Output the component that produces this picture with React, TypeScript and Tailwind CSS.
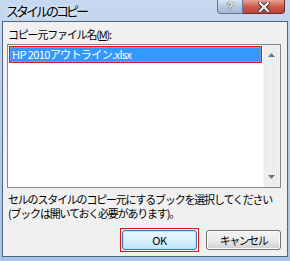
import React from 'react'

const font = { fontFamily: '"Noto Sans CJK JP", "Liberation Sans", sans-serif' }

function TitleButtons() {
  return (
    <div className="absolute right-[5px] top-0 flex">
      <div className="w-[26px] h-[14px] rounded-bl-[4px] border border-t-0 border-[#5f7590] bg-gradient-to-b from-[#dbe6f4] via-[#b7c9e0] to-[#a4b9d6] flex items-center justify-center">
        <span className="text-[11px] leading-[13px] font-bold text-white [text-shadow:0_0_1px_#333,0_0_1px_#333]" style={{ fontFamily: '"Liberation Sans", sans-serif' }}>?</span>
      </div>
      <div className="w-[42px] h-[14px] rounded-br-[4px] border border-l-0 border-t-0 border-[#6b2a24] bg-gradient-to-b from-[#e5a393] via-[#cc5b4b] to-[#b8453a] flex items-center justify-center">
        <svg width="12" height="10" viewBox="0 0 12 10">
          <path d="M2 1 L10 9 M10 1 L2 9" stroke="#3a3a3a" strokeWidth="4" strokeLinecap="square" />
          <path d="M2 1 L10 9 M10 1 L2 9" stroke="#ffffff" strokeWidth="2" strokeLinecap="square" />
        </svg>
      </div>
    </div>
  )
}

function ScrollBar() {
  return (
    <div className="w-[17px] flex flex-col justify-between items-center py-[8px] bg-[repeating-linear-gradient(90deg,#f3f3f3_0px,#f3f3f3_1px,#e9e9e9_1px,#e9e9e9_2px)]">
      <svg width="7" height="4" viewBox="0 0 7 4"><path d="M3.5 0 L7 4 L0 4 Z" fill="#6a7786" /></svg>
      <svg width="7" height="4" viewBox="0 0 7 4"><path d="M0 0 L7 0 L3.5 4 Z" fill="#6a7786" /></svg>
    </div>
  )
}

export default function App() {
  return (
    <div
      className="w-[290px] h-[261px] flex flex-col bg-gradient-to-b from-[#c5d8ef] via-[#b3cbea] to-[#a9c4e8] relative overflow-hidden"
      style={font}
    >
      <div className="h-[21px] relative">
        <span className="absolute left-[6px] top-[2px] text-[13px] leading-[17px] tracking-[-3px] text-black [text-shadow:0_0_6px_#ffffff]">
          スタイルのコピー
        </span>
        <TitleButtons />
      </div>

      <div className="mx-[2px] mb-[4px] flex-1 border border-[#52657e] bg-[#f0f0f0] flex flex-col px-[4px] text-[11px] text-black">
        <div className="h-[22px] pt-[6px] pl-[1px] leading-[13px] tracking-[-1.2px]">
          コピー元ファイル名(<span className="underline">M</span>):
        </div>

        <div className="h-[144px] w-[274px] border border-[#828790] bg-white flex">
          <div className="flex-1 p-px">
            <div className="h-[17px] border border-[#e0141a]">
              <div className="h-full bg-[#3399ff] border border-dotted border-[#e8a040] flex items-center pl-[1px] text-white leading-none tracking-[-0.6px]">
                HP 2010アウトライン.xlsx
              </div>
            </div>
          </div>
          <ScrollBar />
        </div>

        <div className="pt-[4px] pl-[1px] leading-[14px] tracking-[-1.2px] whitespace-nowrap">
          <div>セルのスタイルのコピー元にするブックを選択してください</div>
          <div>(ブックは開いておく必要があります)。</div>
        </div>

        <div className="flex justify-end gap-[7px] pt-[8px] pr-[2px]">
          <div className="border border-[#e0141a] p-px">
            <div className="w-[75px] h-[20px] rounded-[3px] border border-[#3c7fb1] shadow-[inset_0_0_0_1px_#aee7fb] bg-gradient-to-b from-[#eaf6fd] via-[#d9f0fc] to-[#bee6fd] flex items-center justify-center text-[11px] leading-none tracking-[-0.5px]">
              OK
            </div>
          </div>
          <div className="mt-[2px] w-[75px] h-[20px] rounded-[3px] border border-[#707070] shadow-[inset_0_0_0_1px_#fcfcfc] bg-gradient-to-b from-[#f2f2f2] via-[#ebebeb] to-[#cfcfcf] flex items-center justify-center text-[11px] leading-none tracking-[-1.5px]">
            キャンセル
          </div>
        </div>
      </div>
    </div>
  )
}
